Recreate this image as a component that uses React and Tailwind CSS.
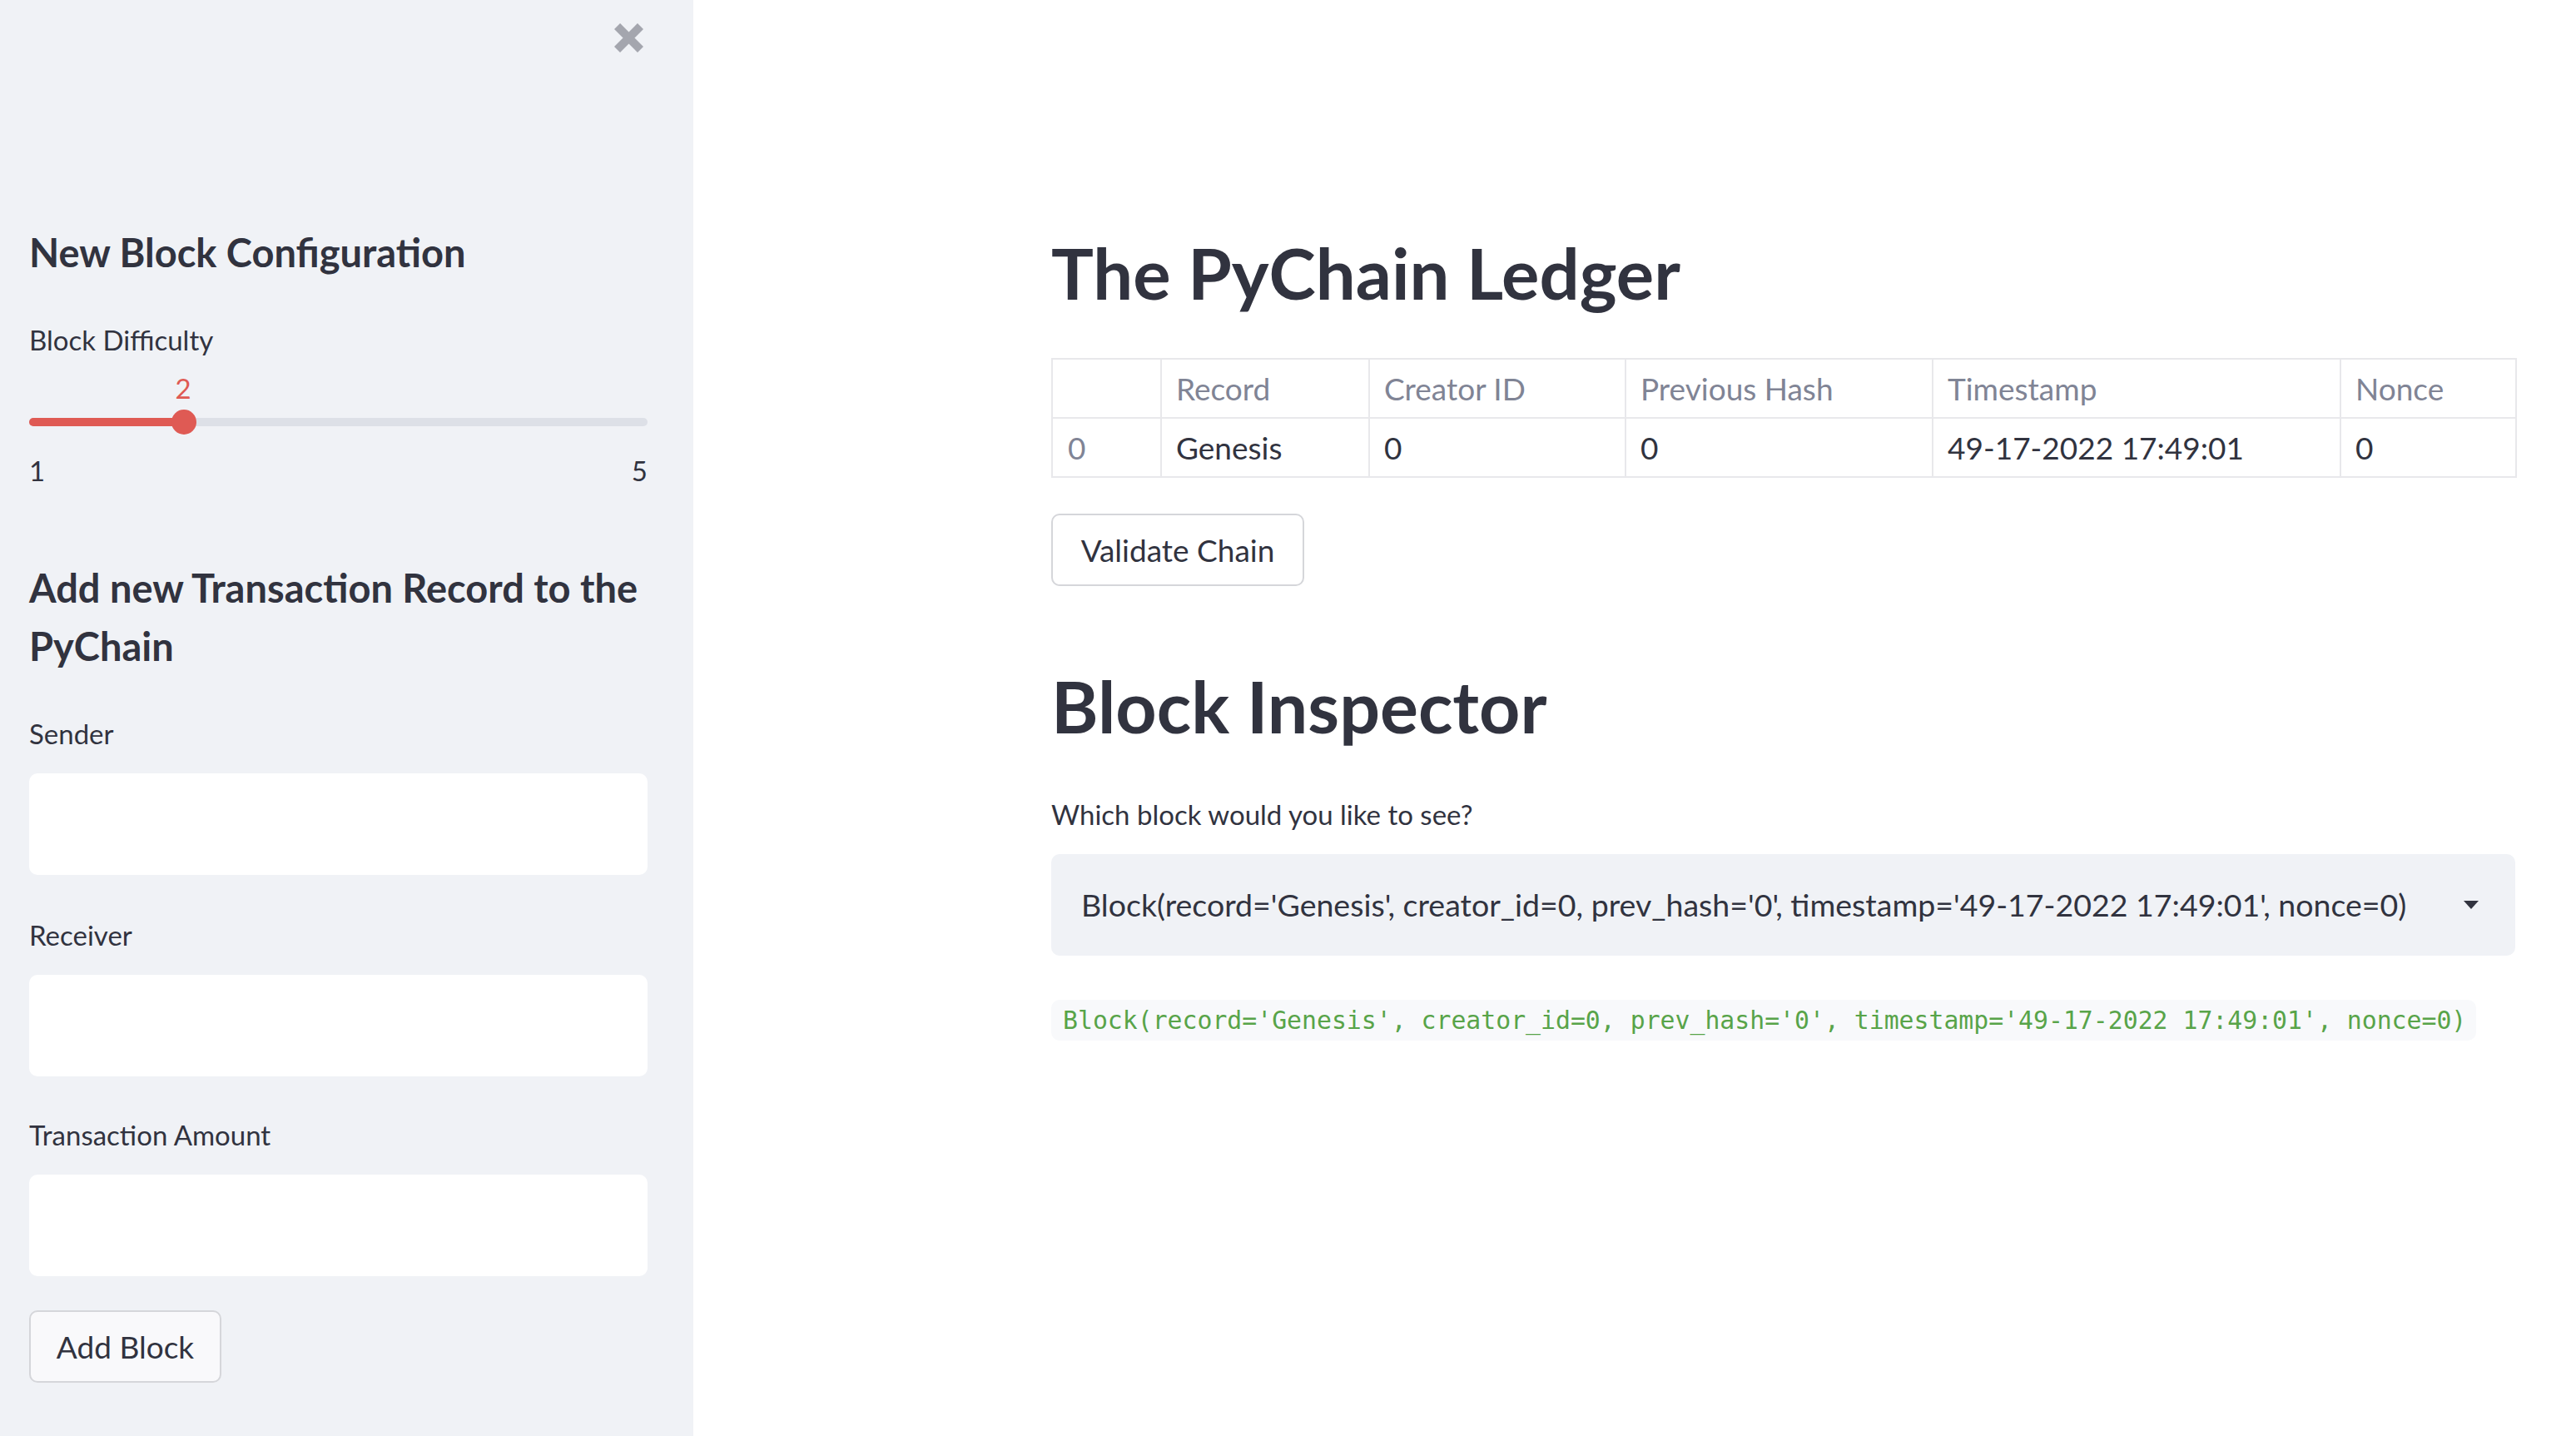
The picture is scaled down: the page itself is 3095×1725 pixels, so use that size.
import { useState } from 'react';

// ── Sidebar bits ──────────────────────────────────────────────────────────────
const FONT = "font-['Lato','Noto_Sans',sans-serif]";

function CloseIcon() {
  return (
    <svg width="35" height="35" viewBox="0 0 35 35" aria-hidden="true">
      <path d="M3.5 3.5 L31.5 31.5 M31.5 3.5 L3.5 31.5" stroke="#a4a6ae" strokeWidth="10" strokeLinecap="butt" />
    </svg>
  );
}

function Field({ label, first }) {
  return (
    <div className={first ? 'mt-[50px]' : 'mt-[52px]'}>
      <div className="text-[33px] leading-[40px] text-[#31333f]">{label}</div>
      <input
        type="text"
        className="mt-[28px] block h-[122px] w-full rounded-[10px] bg-white outline-none"
      />
    </div>
  );
}

function DifficultySlider({ value = 2, min = 1, max = 5 }) {
  const pct = ((value - min) / (max - min)) * 100;
  return (
    <div>
      <div className="mt-[18px] ml-[170px] w-[30px] text-center text-[33px] leading-[40px] text-[#df5a54]">
        {value}
      </div>
      <div className="mt-[6px] flex h-[30px] items-center">
        <div className="relative h-[10px] w-full rounded-full bg-[#dde0e7]">
          <div className="h-full rounded-full bg-[#df5a54]" style={{ width: `${pct}%` }} />
          <div
            className="absolute top-[-10px] h-[30px] w-[30px] -translate-x-1/2 rounded-full bg-[#df5a54]"
            style={{ left: `${pct}%` }}
          />
        </div>
      </div>
      <div className="mt-[23px] flex justify-between text-[33px] leading-[40px] text-[#31333f]">
        <span>{min}</span>
        <span>{max}</span>
      </div>
    </div>
  );
}

function Sidebar() {
  return (
    <aside className="w-[833px] shrink-0 bg-[#f0f2f6] pl-[35px] pr-[55px]">
      <div className="flex justify-end pt-[28px] pr-[5px]">
        <CloseIcon />
      </div>

      <h2 className="mt-[210px] text-[47px] font-bold leading-[60px] text-[#31333f]">
        New Block Configuration
      </h2>
      <div className="mt-[55px] text-[33px] leading-[40px] text-[#31333f]">Block Difficulty</div>
      <DifficultySlider />

      <h2 className="mt-[86px] text-[47px] font-bold leading-[70px] text-[#31333f]">
        Add new Transaction Record to the PyChain
      </h2>

      <Field label="Sender" first />
      <Field label="Receiver" />
      <Field label="Transaction Amount" first />

      <button className="mt-[41px] h-[87px] w-[231px] rounded-[10px] border-2 border-[#d5d6da] bg-[#f9f9fb] text-center text-[37px] text-[#31333f]">
        Add Block
      </button>
    </aside>
  );
}

// ── Main column ───────────────────────────────────────────────────────────────
const COLS = [
  { key: 'idx', label: '', w: 131 },
  { key: 'record', label: 'Record', w: 250 },
  { key: 'creator', label: 'Creator ID', w: 308 },
  { key: 'prev', label: 'Previous Hash', w: 369 },
  { key: 'ts', label: 'Timestamp', w: 490 },
  { key: 'nonce', label: 'Nonce', w: 211 },
];

const ROWS = [
  { idx: '0', record: 'Genesis', creator: '0', prev: '0', ts: '49-17-2022 17:49:01', nonce: '0' },
];

const BLOCK_STR =
  "Block(record='Genesis', creator_id=0, prev_hash='0', timestamp='49-17-2022 17:49:01', nonce=0)";

function Ledger() {
  return (
    <table className="mt-[53px] w-[1759px] table-fixed border-collapse border-2 border-[#e8e8eb] text-[37px]">
      <colgroup>
        {COLS.map(c => <col key={c.key} style={{ width: c.w }} />)}
      </colgroup>
      <thead>
        <tr className="h-[71px]">
          {COLS.map(c => (
            <th key={c.key} className="border-2 border-[#e8e8eb] pl-[17px] text-left font-normal text-[#808495]">
              {c.label}
            </th>
          ))}
        </tr>
      </thead>
      <tbody>
        {ROWS.map(r => (
          <tr key={r.idx} className="h-[71px]">
            {COLS.map(c => (
              <td
                key={c.key}
                className={`border-2 border-[#e8e8eb] ${c.key === 'idx' ? 'pl-[18px] text-[#808495]' : 'pl-[17px] text-[#31333f]'}`}
              >
                {r[c.key]}
              </td>
            ))}
          </tr>
        ))}
      </tbody>
    </table>
  );
}

function BlockSelect() {
  const [val] = useState(BLOCK_STR);
  return (
    <div className="mt-[28px] flex h-[122px] w-[1759px] items-center justify-between rounded-[10px] bg-[#f0f2f6] pl-[36px] pr-[44px]">
      <span className="text-[37.5px] text-[#31333f]">{val}</span>
      <svg width="18" height="10" viewBox="0 0 18 10" aria-hidden="true">
        <path d="M0 0 H18 L9 10 Z" fill="#31333f" />
      </svg>
    </div>
  );
}

export default function App() {
  return (
    <div className={`flex min-h-[1725px] w-full ${FONT}`}>
      <Sidebar />
      <main className="flex-1 bg-white pl-[430px] pr-[73px]">
        <h1 className="pt-[277px] text-[85px] font-bold leading-[100px] text-[#31333f]">The PyChain Ledger</h1>

        <Ledger />

        <button className="mt-[43px] h-[87px] w-[304px] rounded-[10px] border-2 border-[#d5d6da] bg-white text-center text-[37px] text-[#31333f]">
          Validate Chain
        </button>

        <h1 className="mt-[94px] text-[86px] font-bold leading-[100px] text-[#31333f]">Block Inspector</h1>

        <div className="mt-[60px] text-[33px] leading-[40px] text-[#31333f]">Which block would you like to see?</div>

        <BlockSelect />

        <div className="mt-[53px] flex">
          <div className="flex h-[49px] items-center rounded-[10px] bg-[#f8f9fb] pl-[14px] pr-[12px]">
            <code className="whitespace-pre font-['DejaVu_Sans_Mono','Liberation_Mono',monospace] text-[29.8px] leading-none text-[#58a449]">
              {BLOCK_STR}
            </code>
          </div>
        </div>
      </main>
    </div>
  );
}
